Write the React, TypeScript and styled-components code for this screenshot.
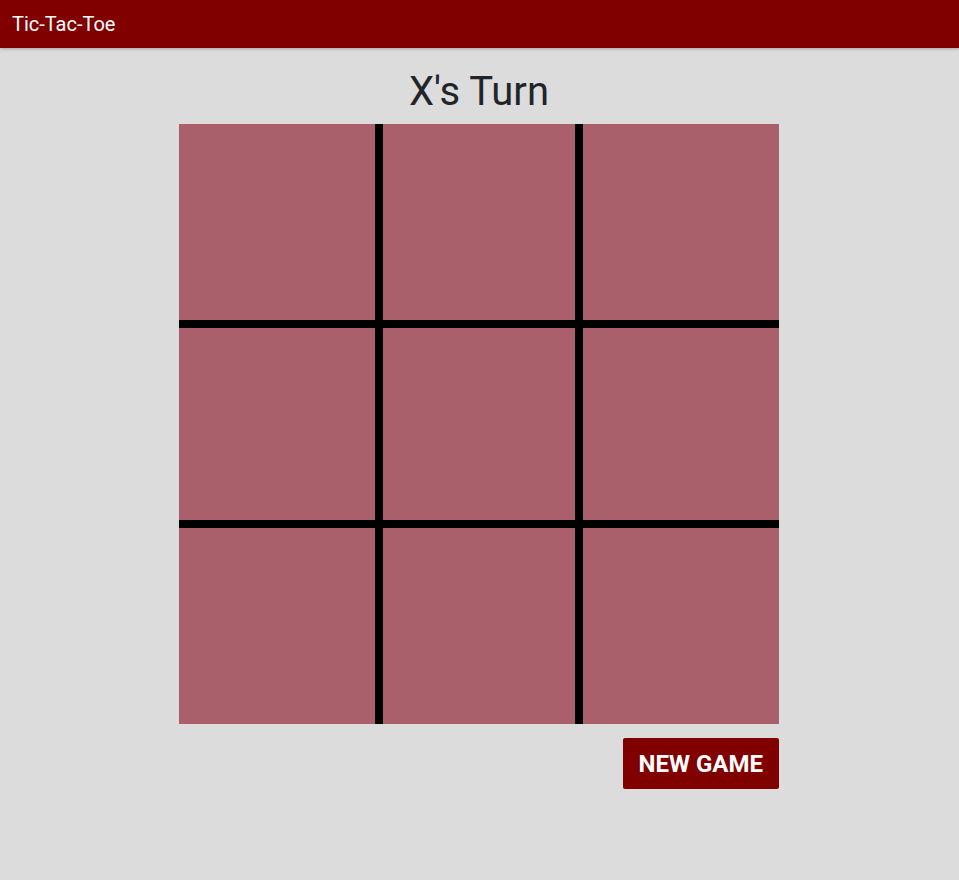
import React, { useState } from "react";
import styled, { createGlobalStyle } from "styled-components";

const GlobalStyle = createGlobalStyle`
  html, body { margin: 0; padding: 0; }
  body {
    background: #dcdcdc;
    font-family: Roboto, "Liberation Sans", Arial, sans-serif;
    color: #212529;
    min-height: 880px;
  }
`;

const Header = styled.header`
  height: 48px;
  background: #800000;
  color: #fff;
  display: flex;
  align-items: center;
  padding: 0 12px;
  font-size: 20px;
  box-shadow: 0 1px 3px rgba(0, 0, 0, 0.25);
`;

const Main = styled.main`
  display: flex;
  flex-direction: column;
  align-items: center;
  padding: 20px 1px 0 0;
`;

const Status = styled.h1`
  margin: 0 0 8px;
  font-size: 40px;
  font-weight: 400;
  line-height: 48px;
  color: #212529;
`;

const Board = styled.div`
  display: grid;
  grid-template-columns: repeat(3, 200px);
  grid-template-rows: repeat(3, 200px);
  background: #000;
`;

const Cell = styled.button<{ $row: number; $col: number }>`
  box-sizing: border-box;
  width: 200px;
  height: 200px;
  margin: 0;
  padding: 0;
  background: #a9606a;
  border: 0 solid #000;
  border-top-width: ${(p) => (p.$row > 0 ? 4 : 0)}px;
  border-bottom-width: ${(p) => (p.$row < 2 ? 4 : 0)}px;
  border-left-width: ${(p) => (p.$col > 0 ? 4 : 0)}px;
  border-right-width: ${(p) => (p.$col < 2 ? 4 : 0)}px;
  font-family: inherit;
  font-size: 120px;
  color: #fff;
  cursor: pointer;
`;

const Actions = styled.div`
  width: 600px;
  display: flex;
  justify-content: flex-end;
  margin-top: 14px;
`;

const NewGame = styled.button`
  height: 51px;
  padding: 0 16px;
  background: #800000;
  color: #fff;
  border: none;
  border-radius: 2px;
  font-family: Roboto, "Liberation Sans", Arial, sans-serif;
  font-weight: 700;
  font-size: 24px;
  text-transform: uppercase;
  cursor: pointer;
`;

export default function App() {
  const [cells, setCells] = useState<string[]>(Array(9).fill(""));
  const [turn, setTurn] = useState<"X" | "O">("X");

  const play = (i: number) => {
    if (cells[i]) return;
    const next = cells.slice();
    next[i] = turn;
    setCells(next);
    setTurn(turn === "X" ? "O" : "X");
  };

  return (
    <>
      <GlobalStyle />
      <Header>Tic-Tac-Toe</Header>
      <Main>
        <Status>{turn}'s Turn</Status>
        <Board>
          {cells.map((c, i) => (
            <Cell key={i} $row={Math.floor(i / 3)} $col={i % 3} onClick={() => play(i)}>
              {c}
            </Cell>
          ))}
        </Board>
        <Actions>
          <NewGame
            onClick={() => {
              setCells(Array(9).fill(""));
              setTurn("X");
            }}
          >
            New Game
          </NewGame>
        </Actions>
      </Main>
    </>
  );
}
